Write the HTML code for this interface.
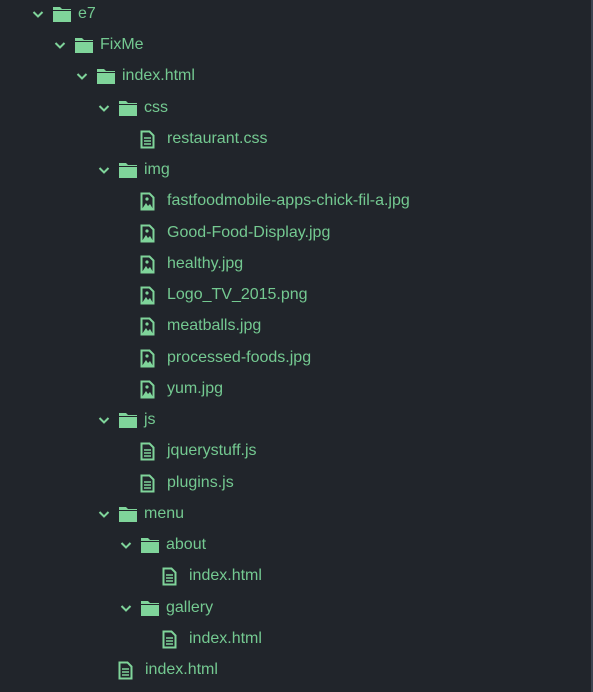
<!DOCTYPE html><html><head><style>
body{margin:0;width:593px;height:692px;background:#21252b;overflow:hidden;position:relative;font-family:"Liberation Sans",sans-serif;}
.r{position:absolute;height:31px;left:0;right:0;color:#74c991;font-size:16px;}
.r span{position:absolute;top:6px;}
svg{position:absolute;}
.edge{position:absolute;right:0;top:0;width:2px;height:692px;background:#3b4450;}
</style></head><body>
<div class="edge"></div>
<div id="t"></div>
<script>
var rows=[[0,'d','e7'],[1,'d','FixMe'],[2,'d','index.html'],[3,'d','css'],[4,'f','restaurant.css'],[3,'d','img'],[4,'i','fastfoodmobile-apps-chick-fil-a.jpg'],[4,'i','Good-Food-Display.jpg'],[4,'i','healthy.jpg'],[4,'i','Logo_TV_2015.png'],[4,'i','meatballs.jpg'],[4,'i','processed-foods.jpg'],[4,'i','yum.jpg'],[3,'d','js'],[4,'f','jquerystuff.js'],[4,'f','plugins.js'],[3,'d','menu'],[4,'d','about'],[5,'f','index.html'],[4,'d','gallery'],[5,'f','index.html'],[3,'f','index.html']];
var h='',c='#7fd49a';
rows.forEach(function(r,i){var L=r[0],y=Math.round(-1+i*31.24),x=22*L;var s='<div class="r" style="top:'+y+'px">';
if(r[1]=='d'){s+='<svg style="left:'+(32+x)+'px;top:11px" width="12" height="9"><path d="M1.5 2 L6 6.5 L10.5 2" stroke="'+c+'" stroke-width="2" fill="none"/></svg>';
s+='<svg style="left:'+(52+x)+'px;top:7px" width="20" height="17"><path d="M1 1h7l2 2h9v13H1z" fill="'+c+'"/><path d="M1 4.5h18" stroke="#21252b" stroke-width="1"/></svg>';}
else if(r[1]=='f'){s+='<svg style="left:'+(52+x)+'px;top:6px" width="16" height="19"><path d="M1.5 1.5h8l4 4v12h-12z" fill="none" stroke="'+c+'" stroke-width="2"/><path d="M4 8h7M4 11h7M4 14h7" stroke="'+c+'" stroke-width="1.6"/></svg>';}
else{s+='<svg style="left:'+(52+x)+'px;top:6px" width="16" height="19"><path d="M1.5 1.5h8l4 4v12h-12z" fill="none" stroke="'+c+'" stroke-width="2"/><circle cx="7" cy="7" r="1.6" fill="'+c+'"/><path d="M2 17l4-6 2 3 2-2 3 5z" fill="'+c+'"/></svg>';}
var tx=(r[1]=='d'?78:79)+x;s+='<span style="left:'+tx+'px">'+r[2]+'</span></div>';h+=s;});
document.getElementById('t').innerHTML=h;
</script>
</body></html>
